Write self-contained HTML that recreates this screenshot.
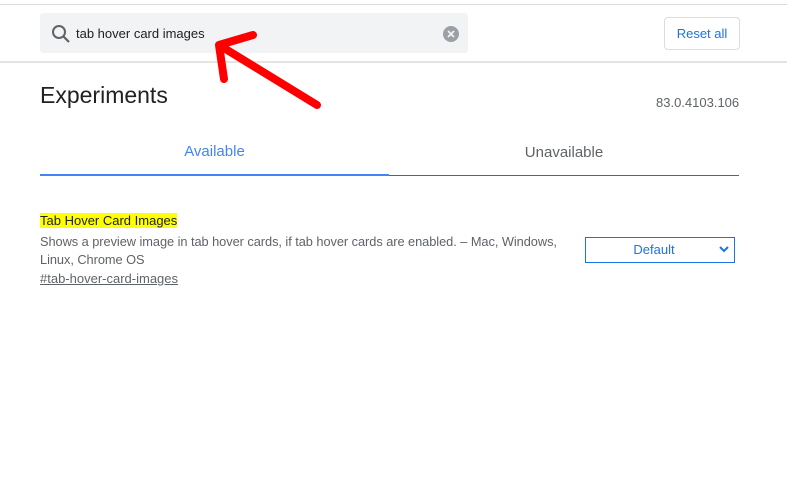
<!DOCTYPE html>
<html><head><style>
body{margin:0;width:787px;height:486px;background:#fff;font-family:"Liberation Sans",sans-serif;position:relative;overflow:hidden}
.a{position:absolute}
</style></head><body>
<div class="a" style="left:0;top:4px;width:787px;height:1px;background:#dadce0"></div>
<div class="a" style="left:0;top:61px;width:787px;height:2px;background:#e4e4e4"></div>
<div class="a" style="left:40px;top:13px;width:428px;height:40px;background:#f1f3f4;border-radius:3px"></div>
<svg class="a" style="left:50px;top:23px" width="22" height="22" viewBox="0 0 22 22"><circle cx="9" cy="9" r="6" fill="none" stroke="#5f6368" stroke-width="2"/><path d="M13.5 13.5L19 19" stroke="#5f6368" stroke-width="2.2"/></svg>
<div class="a" style="left:76px;top:26px;font-size:13px;color:#202124">tab hover card images</div>
<svg class="a" style="left:442px;top:25px" width="18" height="18" viewBox="0 0 18 18"><circle cx="9" cy="9" r="8" fill="#9aa0a6"/><path d="M6 6L12 12M12 6L6 12" stroke="#f1f3f4" stroke-width="1.8"/></svg>
<div class="a" style="left:664px;top:17px;width:74px;height:31px;border:1px solid #dadce0;border-radius:4px;color:#1a73e8;font-size:13px;text-align:center;line-height:31px">Reset all</div>
<div class="a" style="left:40px;top:82px;font-size:23px;color:#202124">Experiments</div>
<div class="a" style="left:656px;top:95px;font-size:13px;color:#5f6368">83.0.4103.106</div>
<div class="a" style="left:40px;top:143px;width:349px;text-align:center;font-size:15px;color:#4285f4">Available</div>
<div class="a" style="left:389px;top:144px;width:350px;text-align:center;font-size:15px;color:#5f6368">Unavailable</div>
<div class="a" style="left:40px;top:174px;width:349px;height:2px;background:#4285f4"></div>
<div class="a" style="left:389px;top:175px;width:350px;height:1px;background:#5f6368"></div>
<div class="a" style="left:40px;top:213px;font-size:13px;color:#202124;background:#ffff00;line-height:15px">Tab Hover Card Images</div>
<div class="a" style="left:40px;top:233px;width:540px;font-size:12.8px;letter-spacing:-0.05px;color:#5f6368;line-height:18px">Shows a preview image in tab hover cards, if tab hover cards are enabled. – Mac, Windows,<br>Linux, Chrome OS</div>
<div class="a" style="left:40px;top:271px;font-size:13px;color:#5f6368;text-decoration:underline">#tab-hover-card-images</div>
<div class="a" style="left:585px;top:237px;width:136px;padding-right:12px;height:24px;border:1px solid #1a73e8;color:#1a73e8;font-size:13px;line-height:24px;text-align:center">Default</div>
<svg class="a" style="left:718px;top:244px" width="12" height="10" viewBox="0 0 12 10"><path d="M2 3L6 7L10 3" fill="none" stroke="#1a73e8" stroke-width="2"/></svg>
<svg class="a" style="left:0;top:0" width="787" height="486"><path d="M317 105L219 45M219 45L253 35M219 45L224 79" stroke="#ff0000" stroke-width="8" stroke-linecap="round" fill="none"/></svg>
</body></html>
